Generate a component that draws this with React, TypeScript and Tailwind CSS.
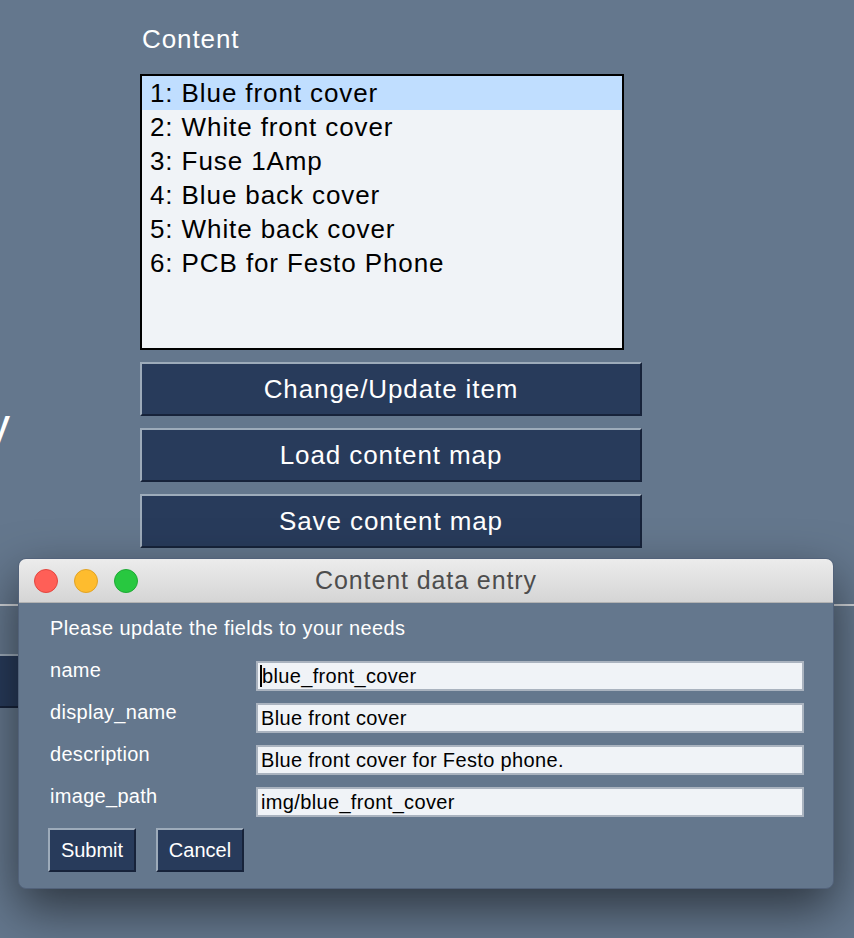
import React from 'react'

// ============================================================================
// Data
// ============================================================================

const ITEMS = [
  '1: Blue front cover',
  '2: White front cover',
  '3: Fuse 1Amp',
  '4: Blue back cover',
  '5: White back cover',
  '6: PCB for Festo Phone',
]

const FIELDS = [
  { label: 'name', value: 'blue_front_cover', focused: true },
  { label: 'display_name', value: 'Blue front cover' },
  { label: 'description', value: 'Blue front cover for Festo phone.' },
  { label: 'image_path', value: 'img/blue_front_cover' },
]

const BEVEL =
  'border-t-2 border-l-2 border-b-2 border-r-2 border-t-[#9dabba] border-l-[#9dabba] border-b-[#17233a] border-r-[#17233a] bg-[#283b5b] text-white'

// ============================================================================
// Pieces
// ============================================================================

function WideButton({ label, className = '' }: { label: string; className?: string }) {
  return (
    <div
      className={`${BEVEL} flex h-[54px] w-[502px] items-center justify-center text-[26px] leading-[30px] tracking-[0.9px] ${className}`}
    >
      {label}
    </div>
  )
}

function Listbox() {
  return (
    <div className="h-[276px] w-[484px] border-2 border-black bg-[#f0f3f7]">
      {ITEMS.map((item, i) => (
        <div
          key={item}
          className={`h-[34px] pl-[8px] text-[26px] leading-[34px] tracking-[0.9px] text-black ${
            i === 0 ? 'bg-[#c0deff]' : ''
          }`}
        >
          {item}
        </div>
      ))}
    </div>
  )
}

function TrafficLights() {
  return (
    <div className="flex items-center gap-[16px]">
      <span className="h-[24px] w-[24px] rounded-full border border-[#e2463f] bg-[#ff5f57]" />
      <span className="h-[24px] w-[24px] rounded-full border border-[#e1a325] bg-[#febc2e]" />
      <span className="h-[24px] w-[24px] rounded-full border border-[#1eaa35] bg-[#28c840]" />
    </div>
  )
}

function EntryDialog() {
  return (
    <div className="absolute left-[18px] top-[558px] w-[816px] overflow-hidden rounded-[8px] border border-[#52627a] bg-[#64778d] shadow-[0_20px_50px_rgba(0,0,0,0.55)]">
      {/* Title bar */}
      <div className="relative flex h-[44px] items-center border-b border-[#b3b3b3] bg-gradient-to-b from-[#ececec] to-[#d5d5d5] pl-[15px]">
        <TrafficLights />
        <div className="absolute inset-0 flex items-center justify-center text-[25px] tracking-[0.9px] text-[#4d4d4d]">
          Content data entry
        </div>
      </div>

      {/* Body */}
      <div className="pl-[31px] pr-[29px] pt-[13px] pb-[16px] text-white">
        <div className="text-[20px] leading-[24px] tracking-[0.4px]">
          Please update the fields to your needs
        </div>

        <div className="mt-[18px] flex flex-col">
          {FIELDS.map((f) => (
            <div key={f.label} className="flex h-[42px] items-start">
              <div className="w-[206px] shrink-0 text-[20px] leading-[24px] tracking-[0.3px]">
                {f.label}
              </div>
              <div className="mt-[3px] flex h-[30px] flex-1 items-center border-2 border-[#aab3bf] bg-[#f0f3f7] pl-[2px] text-[20px] leading-[24px] tracking-[0.35px] text-black">
                {f.focused && <span className="inline-block h-[22px] w-[2px] bg-black" />}
                <span className={f.focused ? '' : 'pl-[1px]'}>{f.value}</span>
              </div>
            </div>
          ))}
        </div>

        <div className="mt-[2px] -ml-[2px] flex gap-[20px]">
          <div className={`${BEVEL} flex h-[44px] w-[88px] items-center justify-center text-[20px]`}>
            Submit
          </div>
          <div className={`${BEVEL} flex h-[44px] w-[88px] items-center justify-center text-[20px]`}>
            Cancel
          </div>
        </div>
      </div>
    </div>
  )
}

// ============================================================================
// App
// ============================================================================

export default function App() {
  return (
    <div className="relative h-[938px] w-full overflow-hidden bg-[#64778d] font-['Liberation_Sans']">
      <div className="flex">
        {/* Left column, mostly off-screen */}
        <div className="w-[140px] shrink-0 pt-[398px]">
          <span className="-ml-[14px] block text-[48px] leading-[56px] text-white">y</span>
        </div>

        {/* Content column */}
        <div className="flex flex-col pt-[24px]">
          <div className="pl-[2px] text-[26px] leading-[30px] tracking-[0.9px] text-white">Content</div>
          <div className="mt-[20px]">
            <Listbox />
          </div>
          <div className="mt-[12px] flex flex-col gap-[12px]">
            <WideButton label="Change/Update item" />
            <WideButton label="Load content map" />
            <WideButton label="Save content map" />
          </div>
        </div>
      </div>

      {/* Separator */}
      <div className="mt-[56px] h-[2px] w-full bg-[#cfd3d8]" />

      {/* Lower row, hidden behind the dialog */}
      <div className="mt-[48px] flex">
        <WideButton label="" className="-ml-[120px] w-[260px]" />
      </div>

      <EntryDialog />
    </div>
  )
}
